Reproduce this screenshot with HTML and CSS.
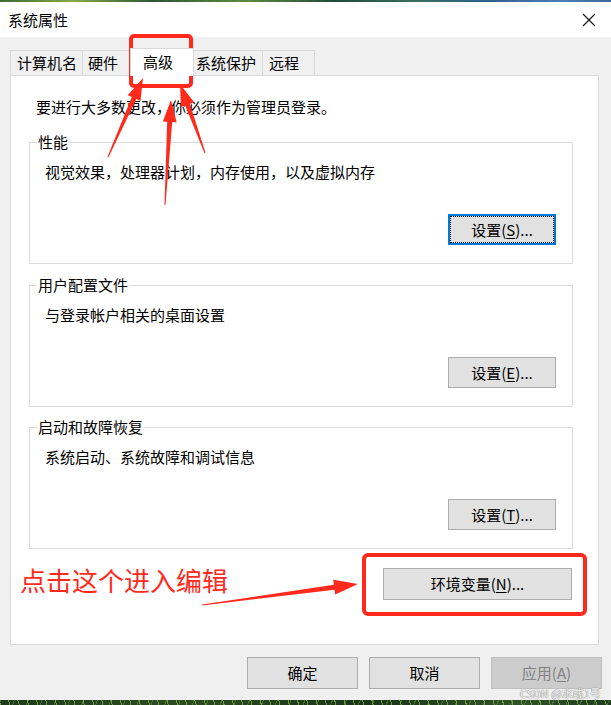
FILE: index.html
```html
<!DOCTYPE html>
<html lang="zh-CN">
<head>
<meta charset="utf-8">
<title>系统属性</title>
<link rel="stylesheet" href="styles.css">
</head>
<body>
<div class="window">
  <div class="edge-top"></div>
  <div class="titlebar">
    <span class="title">系统属性</span>
    <svg class="close" width="14" height="14" viewBox="0 0 14 14"><path d="M1 1 L13 13 M13 1 L1 13" stroke="#111" stroke-width="1.1" fill="none"/></svg>
  </div>
  <div class="main">
    <div class="tabs">
      <div class="tab t1">计算机名</div>
      <div class="tab t2">硬件</div>
      <div class="tab sel">高级</div>
      <div class="tab t4">系统保护</div>
      <div class="tab t5">远程</div>
    </div>
    <div class="panel">
      <p class="intro">要进行大多数更改，你必须作为管理员登录。</p>
      <div class="group g1">
        <div class="legend">性能</div>
        <div class="desc">视觉效果，处理器计划，内存使用，以及虚拟内存</div>
        <div class="btnrow"><button class="btn set default">设置(<u>S</u>)...</button></div>
      </div>
      <div class="group g2">
        <div class="legend">用户配置文件</div>
        <div class="desc">与登录帐户相关的桌面设置</div>
        <div class="btnrow"><button class="btn set">设置(<u>E</u>)...</button></div>
      </div>
      <div class="group g3">
        <div class="legend">启动和故障恢复</div>
        <div class="desc">系统启动、系统故障和调试信息</div>
        <div class="btnrow"><button class="btn set">设置(<u>T</u>)...</button></div>
      </div>
      <div class="envrow"><button class="btn env">环境变量(<u>N</u>)...</button></div>
    </div>
    <div class="footer">
      <button class="btn foot">确定</button>
      <button class="btn foot">取消</button>
      <button class="btn foot disabled">应用(<u>A</u>)</button>
    </div>
  </div>
  <div class="edge-bottom"></div>

  <svg class="annot" width="611" height="705" viewBox="0 0 611 705">
    <rect x="131" y="36" width="60" height="50" rx="3" fill="none" stroke="#ff2a1c" stroke-width="4"/>
    <rect x="364" y="555" width="221" height="59" rx="4" fill="none" stroke="#ff2a1c" stroke-width="4"/>
    <polygon fill="#ff2a1c" points="108.5,157.2 136.4,99.1 140.5,100.9 143,78 127.7,95.3 131.8,97.1 107.5,156.8"/>
    <polygon fill="#ff2a1c" points="165.5,205 172.2,122.1 176.7,122.4 171,100 162.8,121.6 167.2,121.8 164.5,205"/>
    <polygon fill="#ff2a1c" points="205.5,152.8 189.9,103.9 194.1,102.3 180,84 180.9,107.1 185.2,105.6 204.5,153.2"/>
    <polygon fill="#ff2a1c" points="202,605.4 334.5,589.7 335.2,594.6 358,584 333.2,579.8 333.9,584.7 202,604.6"/>
  </svg>
  <div class="note">点击这个进入编辑</div>
  <div class="watermark">CSDN @水彧1号</div>
</div>
</body>
</html>
```
FILE: styles.css
```css
* { box-sizing: border-box; }
html, body { margin: 0; padding: 0; }
body {
  width: 611px;
  height: 705px;
  overflow: hidden;
  background: #f0f0f0;
  font-family: "Noto Sans CJK SC", "Noto Sans", sans-serif;
  font-size: 15px;
  line-height: 20px;
  color: #000;
}
.window {
  position: relative;
  width: 611px;
  height: 705px;
  display: flex;
  flex-direction: column;
}
.edge-top {
  height: 2px;
  background: linear-gradient(90deg, #3c6b2e 0%, #86a94a 12%, #2e5634 25%, #5d8b3d 40%, #1f4a3c 55%, #3b6f5d 68%, #2f5f8e 80%, #4d7fb0 92%, #3a6a98 100%);
}
.titlebar {
  height: 35px;
  background: #fff;
  display: flex;
  align-items: center;
  justify-content: space-between;
  padding: 0 15px 0 8px;
}
.title {
  font-size: 15px;
  line-height: 20px;
  margin-top: 1px;
}
.close { display: block; margin-top: 1px; }
.main {
  height: 663px;
  padding: 13px 12px 0 10px;
  display: flex;
  flex-direction: column;
}
.tabs {
  display: flex;
  align-items: flex-end;
  height: 25px;
}
.tab {
  height: 25px;
  line-height: 24px;
  border: 1px solid #d9d9d9;
  border-bottom: none;
  border-right: none;
  background: #f0f0f0;
  white-space: nowrap;
}
.t1 { width: 72px; padding-left: 6px; }
.t2 { width: 50px; padding-left: 5px; }
.sel {
  width: 64px;
  height: 28px;
  margin: 0 -2px -1px -2px;
  padding-left: 12px;
  line-height: 26px;
  background: #fff;
  border-right: 1px solid #d9d9d9;
  position: relative;
  z-index: 1;
}
.t4 { width: 70px; padding-left: 4px; border-left: none; }
.t5 { width: 53px; padding-left: 6px; border-right: 1px solid #d9d9d9; }
.panel {
  height: 570px;
  background: #fff;
  border: 1px solid #d9d9d9;
  padding: 0 25px 0 18px;
}
.intro {
  margin: 21px 0 0 7px;
  line-height: 20px;
}
.group {
  height: 122px;
  border: 1px solid #dcdcdc;
}
.g1 { margin-top: 25px; }
.g2 { margin-top: 21px; }
.g3 { margin-top: 20px; }
.legend {
  display: block;
  width: fit-content;
  margin: -11px 0 0 7px;
  padding: 0 1px;
  background: #fff;
  line-height: 20px;
}
.desc {
  margin-top: 10px;
  padding-left: 15px;
  line-height: 20px;
}
.btnrow {
  display: flex;
  justify-content: flex-end;
  padding-right: 16px;
  margin-top: 32px;
}
.btn {
  font-family: "Noto Sans CJK SC", "Noto Sans", sans-serif;
  font-size: 15px;
  color: #000;
  background: #e1e1e1;
  border: 1px solid #adadad;
  border-radius: 0;
  padding: 0;
  margin: 0;
  line-height: 20px;
  text-align: center;
}
.btn u { text-decoration-thickness: 1px; text-underline-offset: 2px; }
.set { width: 108px; height: 31px; }
.default {
  border: 2px solid #0078d7;
  outline: 1px dotted #000;
  outline-offset: -3px;
}
.envrow {
  display: flex;
  justify-content: flex-end;
  margin-top: 19px;
  padding-right: 1px;
}
.env { width: 189px; height: 32px; }
.footer {
  display: flex;
  justify-content: flex-end;
  gap: 11px;
  margin-top: 12px;
  margin-right: -3px;
}
.foot { width: 111px; height: 32px; }
.disabled {
  background: #cccccc;
  border-color: #bfbfbf;
  color: #838383;
}
.edge-bottom {
  height: 5px;
  background:
    repeating-linear-gradient(75deg, rgba(140,190,80,0.7) 0 1px, transparent 1px 9px),
    repeating-linear-gradient(110deg, rgba(90,150,60,0.6) 0 1px, transparent 1px 13px),
    linear-gradient(90deg, #1d3b1c, #2c4d22 30%, #1a3418 60%, #30532a 85%, #1f3d1f);
}
.annot {
  position: absolute;
  left: 0;
  top: 0;
  pointer-events: none;
}
.note {
  position: absolute;
  left: 20px;
  top: 564px;
  font-size: 26px;
  line-height: 32px;
  color: #ff2a1c;
  white-space: nowrap;
}
.watermark {
  position: absolute;
  left: 520px;
  top: 686px;
  font-family: "Noto Sans CJK SC", "Noto Sans", sans-serif;
  font-size: 11px;
  line-height: 14px;
  color: #f6f6f6;
  text-shadow: 0 0 1px #6e6e6e, 0 0 1px #8a8a8a;
  white-space: nowrap;
}
```
